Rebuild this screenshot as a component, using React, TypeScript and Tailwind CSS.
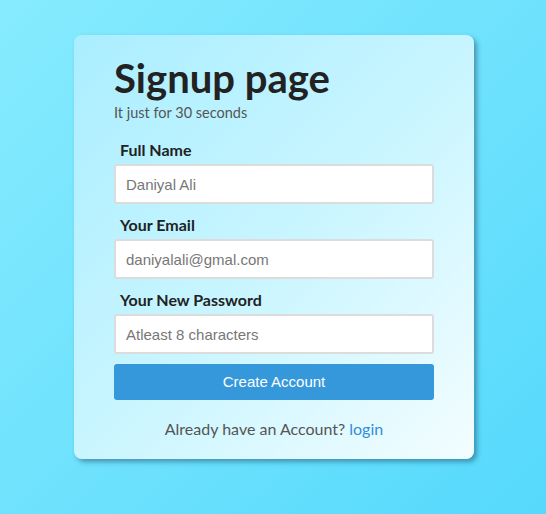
import React from "react";

export default function App() {
  const fields = [
    { label: "Full Name", ph: "Daniyal Ali" },
    { label: "Your Email", ph: "daniyalali@gmal.com" },
    { label: "Your New Password", ph: "Atleast 8 characters" },
  ];
  return (
    <div className="w-full min-h-[514px] flex justify-center items-start pt-[35px] pl-[2px] bg-[linear-gradient(135deg,#86ebfe_0%,#6fe2fd_50%,#55d9fc_100%)]">
      <div className="w-[400px] h-[424px] rounded-[8px] px-10 pt-[19px] bg-[linear-gradient(135deg,#aaeeff_0%,#c8f5ff_50%,#f3fdff_100%)] shadow-[3px_3px_5px_rgba(20,60,90,0.45)] font-['Lato','Noto_Sans',sans-serif]">
        <h1 className="text-[40px] leading-[48px] font-bold text-[#222]">Signup page</h1>
        <p className="text-[14.5px] leading-[17px] text-[#555] mt-[2px]">It just for 30 seconds</p>
        <div className="mt-[19px] flex flex-col">
          {fields.map((f, i) => (
            <div key={i} className={i === 2 ? "flex flex-col mb-[10px]" : "flex flex-col mb-[11px]"}>
              <label className="pl-[6px] text-[16px] leading-[19px] font-bold text-[#222] mb-[5px]">{f.label}</label>
              <input
                type="text"
                placeholder={f.ph}
                className="w-full h-[40px] bg-white border-2 border-[#dcdcdc] rounded-[3px] px-[10px] text-[15px] font-['Liberation_Sans',Arial,sans-serif] placeholder:text-[#777] outline-none"
              />
            </div>
          ))}
          <button className="w-full h-[36px] bg-[#3498db] rounded-[3px] text-white text-[15px] font-['Liberation_Sans',Arial,sans-serif]">
            Create Account
          </button>
          <p className="text-center mt-[17px] text-[16px] leading-[24px] text-[#555]">
            Already have an Account? <a className="text-[#2f8fd8]">login</a>
          </p>
        </div>
      </div>
    </div>
  );
}
